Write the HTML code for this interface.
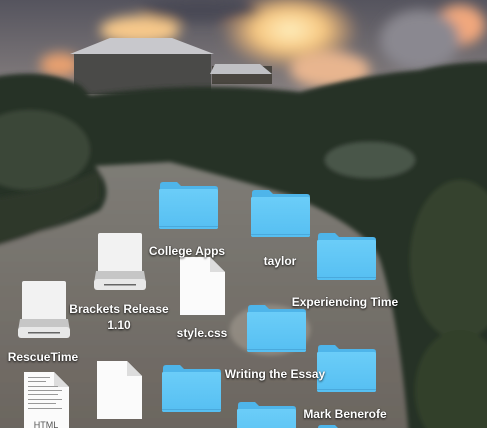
<!DOCTYPE html>
<html><head><meta charset="utf-8"><style>
html,body{margin:0;padding:0;width:487px;height:428px;overflow:hidden;background:#2c352b}
#wrap{position:relative;width:487px;height:428px;overflow:hidden}
#bg{position:absolute;left:0;top:0}
.ic{position:absolute}
.lb{position:absolute;color:#fff;font:bold 12px "Liberation Sans",sans-serif;text-align:center;white-space:nowrap;text-shadow:0 1px 2px rgba(0,0,0,.8),0 0 1px rgba(0,0,0,.6);line-height:16px}
</style></head><body><div id="wrap">
<svg id="bg" width="487" height="428" viewBox="0 0 487 428">
<defs>
<filter id="b" x="-50%" y="-50%" width="200%" height="200%"><feGaussianBlur stdDeviation="6"/></filter>
<filter id="b2" x="-20%" y="-20%" width="140%" height="140%"><feGaussianBlur stdDeviation="2"/></filter>
<linearGradient id="sky" x1="0" y1="0" x2="0" y2="1"><stop offset="0" stop-color="#55545e"/><stop offset="1" stop-color="#8f8785"/></linearGradient>
<radialGradient id="sun" cx="0.5" cy="0.5" r="0.5"><stop offset="0" stop-color="#fff0c0"/><stop offset="0.5" stop-color="#f7c780"/><stop offset="1" stop-color="#f7b070" stop-opacity="0"/></radialGradient>
<linearGradient id="path" x1="0" y1="0" x2="0" y2="1"><stop offset="0" stop-color="#7e7c76"/><stop offset="1" stop-color="#6a645e"/></linearGradient>
</defs>
<rect width="487" height="110" fill="url(#sky)"/>
<g filter="url(#b)">
<ellipse cx="290" cy="30" rx="70" ry="40" fill="url(#sun)"/>
<ellipse cx="140" cy="30" rx="40" ry="14" fill="#f6c88a"/>
<ellipse cx="460" cy="25" rx="25" ry="20" fill="#f1a77d"/>
<ellipse cx="330" cy="70" rx="40" ry="18" fill="#e8b58f"/>
<ellipse cx="60" cy="65" rx="20" ry="12" fill="#e8a070"/>
<ellipse cx="200" cy="10" rx="60" ry="12" fill="#4a4a55"/>
<ellipse cx="420" cy="40" rx="40" ry="30" fill="#8a8890"/>
</g>
<polygon points="70,54 110,38 172,38 214,54" fill="#c8c8cc"/>
<rect x="74" y="54" width="137" height="40" fill="#4a4a48"/>
<rect x="212" y="66" width="60" height="18" fill="#4a4640"/>
<polygon points="210,74 215,64 260,64 272,74" fill="#c0c0c4"/>
<g filter="url(#b2)">
<path d="M-20,80 Q40,65 80,85 L90,95 Q200,80 300,92 Q360,75 420,70 Q460,60 510,62 L510,450 L-20,450 Z" fill="#283226"/>
<ellipse cx="30" cy="150" rx="60" ry="40" fill="#3a4637"/>
<ellipse cx="370" cy="160" rx="45" ry="18" fill="#4a564a"/>
<ellipse cx="460" cy="260" rx="50" ry="80" fill="#34432d"/>
<ellipse cx="460" cy="390" rx="45" ry="60" fill="#324029"/>
</g>
<g filter="url(#b2)">
<path d="M95,166 L170,162 Q220,175 290,195 Q370,230 380,260 Q400,320 410,450 L-20,450 L-20,245 Q60,230 100,210 Q115,190 95,166 Z" fill="url(#path)"/>
<ellipse cx="270" cy="330" rx="40" ry="25" fill="#9c958c" opacity=".7"/>
<path d="M-20,200 Q60,190 100,170 L100,200 Q60,230 -20,250 Z" fill="#2f392c"/>
</g>
</svg>

<svg width="0" height="0" style="position:absolute;left:0;top:0"><defs>
<linearGradient id="fg" x1="0" y1="0" x2="0" y2="1"><stop offset="0" stop-color="#6bcdf8"/><stop offset="1" stop-color="#56bff2"/></linearGradient>
<symbol id="fold" viewBox="0 0 59 47"><path d="M1,3 Q1,0 4,0 L18,0 L22,4 L56,4 Q59,4 59,7 L59,45 Q59,47 57,47 L2,47 Q0,47 0,45 Z" fill="#4eb5ea"/><path d="M0,8 Q0,7 2,7 L57,7 Q59,7 59,9 L59,45 Q59,47 57,47 L2,47 Q0,47 0,45 Z" fill="url(#fg)"/><rect x="0" y="44" width="59" height="1" fill="#4aa9dc"/></symbol>
<symbol id="drive" viewBox="0 0 52 57"><rect x="4" y="0" width="44" height="40" rx="2" fill="#f2f2f2"/><path d="M2,38 L50,38 L52,50 Q52,57 46,57 L6,57 Q0,57 0,50 Z" fill="#c6c6c6"/><rect x="0" y="46" width="52" height="11" rx="3" fill="#e8e8e8"/><rect x="10" y="51" width="32" height="1.5" fill="#666"/></symbol>
<symbol id="doc" viewBox="0 0 45 58"><path d="M0,0 L30,0 L45,15 L45,58 L0,58 Z" fill="#fbfbfb"/><path d="M30,0 L30,15 L45,15 Z" fill="#ddd"/></symbol>
</defs></svg>

<svg class="ic" style="left:159px;top:182px" width="59" height="47"><use href="#fold"/></svg>
<svg class="ic" style="left:251px;top:190px" width="59" height="47"><use href="#fold"/></svg>
<svg class="ic" style="left:317px;top:233px" width="59" height="47"><use href="#fold"/></svg>
<svg class="ic" style="left:247px;top:305px" width="59" height="47"><use href="#fold"/></svg>
<svg class="ic" style="left:317px;top:345px" width="59" height="47"><use href="#fold"/></svg>
<svg class="ic" style="left:162px;top:365px" width="59" height="47"><use href="#fold"/></svg>
<svg class="ic" style="left:237px;top:402px" width="59" height="26"><use href="#fold" width="59" height="47"/></svg>
<svg class="ic" style="left:317px;top:425px" width="59" height="3"><use href="#fold" width="59" height="47"/></svg>

<svg class="ic" style="left:94px;top:233px" width="52" height="57"><use href="#drive"/></svg>
<svg class="ic" style="left:18px;top:281px" width="52" height="57"><use href="#drive"/></svg>

<svg class="ic" style="left:180px;top:257px" width="45" height="58"><use href="#doc"/></svg>
<svg class="ic" style="left:97px;top:361px" width="45" height="58"><use href="#doc"/></svg>
<svg class="ic" style="left:24px;top:372px" width="45" height="56"><use href="#doc" width="45" height="58"/>
<g fill="#999"><rect x="4" y="5" width="22" height="1"/><rect x="4" y="9" width="18" height="1"/><rect x="4" y="14" width="30" height="1"/><rect x="4" y="18" width="34" height="1"/><rect x="4" y="22" width="30" height="1"/><rect x="4" y="27" width="34" height="1"/><rect x="4" y="31" width="28" height="1"/><rect x="4" y="36" width="34" height="1"/></g>
<text x="22" y="56" font-family="Liberation Sans" font-size="9" text-anchor="middle" fill="#555">HTML</text></svg>

<div class="lb" style="left:137px;top:243px;width:100px">College Apps</div>
<div class="lb" style="left:230px;top:253px;width:100px">taylor</div>
<div class="lb" style="left:280px;top:294px;width:130px">Experiencing Time</div>
<div class="lb" style="left:69px;top:301px;width:100px">Brackets Release<br>1.10</div>
<div class="lb" style="left:152px;top:325px;width:100px">style.css</div>
<div class="lb" style="left:-7px;top:349px;width:100px">RescueTime</div>
<div class="lb" style="left:210px;top:366px;width:130px">Writing the Essay</div>
<div class="lb" style="left:280px;top:406px;width:130px">Mark Benerofe</div>
</div></body></html>
